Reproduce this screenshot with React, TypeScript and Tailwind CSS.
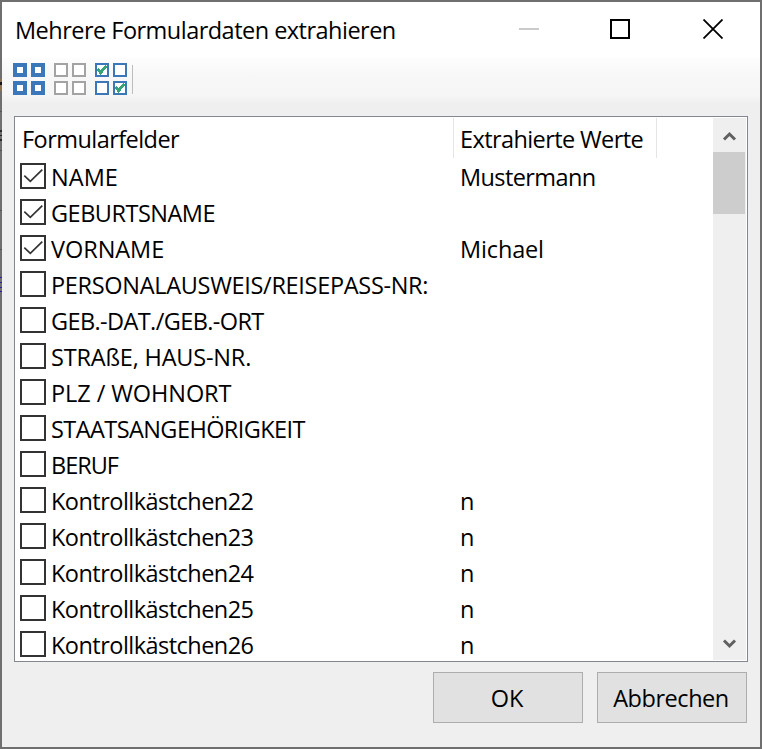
import { useState } from 'react';

const fields = [
  { label: 'NAME', value: 'Mustermann', checked: true, tracking: 'tracking-[0.05px]', valueTracking: 'tracking-[-0.6px]' },
  { label: 'GEBURTSNAME', value: '', checked: true, tracking: 'tracking-[-0.5px]' },
  { label: 'VORNAME', value: 'Michael', checked: true, tracking: 'tracking-[-0.05px]', valueTracking: 'tracking-[-0.15px]' },
  { label: 'PERSONALAUSWEIS/REISEPASS-NR:', value: '', checked: false, tracking: 'tracking-[-0.31px]' },
  { label: 'GEB.-DAT./GEB.-ORT', value: '', checked: false, tracking: 'tracking-[-0.6px]' },
  { label: 'STRAßE, HAUS-NR.', value: '', checked: false, tracking: 'tracking-[-0.19px]' },
  { label: 'PLZ / WOHNORT', value: '', checked: false, tracking: 'tracking-[-0.08px]' },
  { label: 'STAATSANGEHÖRIGKEIT', value: '', checked: false, tracking: 'tracking-[-0.57px]' },
  { label: 'BERUF', value: '', checked: false, tracking: 'tracking-[-1px]' },
  { label: 'Kontrollkästchen22', value: 'n', checked: false, tracking: 'tracking-[-0.53px]' },
  { label: 'Kontrollkästchen23', value: 'n', checked: false, tracking: 'tracking-[-0.53px]' },
  { label: 'Kontrollkästchen24', value: 'n', checked: false, tracking: 'tracking-[-0.53px]' },
  { label: 'Kontrollkästchen25', value: 'n', checked: false, tracking: 'tracking-[-0.53px]' },
  { label: 'Kontrollkästchen26', value: 'n', checked: false, tracking: 'tracking-[-0.53px]' },
];

// top left corners of the four small boxes in a toolbar icon
const cells = [
  [0, 0],
  [18, 0],
  [0, 18],
  [18, 18],
];

function SelectAllIcon() {
  return (
    <svg width="32" height="32" viewBox="0 0 32 32" shapeRendering="crispEdges">
      {cells.map(([x, y]) => (
        <rect key={`${x}-${y}`} x={x + 2} y={y + 2} width="10" height="10" fill="#fff" stroke="#3c78b9" strokeWidth="4" />
      ))}
    </svg>
  );
}

function SelectNoneIcon() {
  return (
    <svg width="32" height="32" viewBox="0 0 32 32" shapeRendering="crispEdges">
      {cells.map(([x, y]) => (
        <rect key={`${x}-${y}`} x={x + 1} y={y + 1} width="12" height="12" fill="#fff" stroke="#a3a3a3" strokeWidth="2" />
      ))}
    </svg>
  );
}

function InvertIcon() {
  return (
    <svg width="32" height="32" viewBox="0 0 32 32" shapeRendering="crispEdges">
      {cells.map(([x, y]) => (
        <rect key={`${x}-${y}`} x={x + 1} y={y + 1} width="12" height="12" fill="#fff" stroke="#3c78b9" strokeWidth="2" />
      ))}
      <path d="M2.5 6 L5.5 9.5 L11.5 3" fill="none" stroke="#36a376" strokeWidth="3" />
      <path d="M20.5 24 L23.5 27.5 L29.5 21" fill="none" stroke="#36a376" strokeWidth="3" />
    </svg>
  );
}

export default function App() {
  const [checked, setChecked] = useState(fields.map((f) => f.checked));

  const toggle = (index: number) => setChecked(checked.map((c, i) => (i === index ? !c : c)));

  return (
    <div className="relative flex h-[749px] w-[762px] flex-col border-2 border-[#6f6f6f] bg-[#efefef] font-['Open_Sans',sans-serif] text-[23.5px] leading-[36px] text-black">
      {/* Title bar */}
      <div className="flex h-14 shrink-0 items-start bg-white pl-[13px]">
        <div className="w-[504px] pt-[10px] whitespace-nowrap"><span className="tracking-[-0.52px]">Mehrere Formulardaten extrahieren</span></div>
        <div className="mt-[26px] h-[2px] w-5 bg-[#cbcbcb]"></div>
        <div className="mt-[17px] ml-[71px] h-5 w-5 border-2 border-black"></div>
        <svg className="mt-[17px] ml-[73px]" width="20" height="20" viewBox="0 0 20 20" stroke="#000" strokeWidth="1.8">
          <path d="M0.5 0.5 L19.5 19.5 M19.5 0.5 L0.5 19.5" />
        </svg>
      </div>

      {/* Toolbar */}
      <div className="flex h-[54px] shrink-0 bg-[linear-gradient(#fdfdfd,#f7f7f7_35%,#f6f6f6_68%,#efefef_85%)] pt-[5px] pl-[11px]">
        <SelectAllIcon />
        <div className="ml-[9px]"><SelectNoneIcon /></div>
        <div className="ml-[9px]"><InvertIcon /></div>
        <div className="mt-[2px] ml-[5px] h-[29px] w-px bg-[#bdbdbd]"></div>
      </div>

      {/* Field list */}
      <div className="mt-[4px] ml-3 flex h-[546px] w-[734px] shrink-0 border border-[#828790] bg-white p-px">
        <div className="w-[697px] overflow-hidden">
          <div className="flex h-10 whitespace-nowrap">
            <div className="w-[438px] border-r border-[#e5e5e5] pt-[3px] pl-[6px]"><span className="tracking-[-0.55px]">Formularfelder</span></div>
            <div className="w-[203px] border-r border-[#e5e5e5] pt-[3px] pl-[6px]"><span className="tracking-[-0.6px]">Extrahierte Werte</span></div>
          </div>
          {fields.map((field, i) => (
            <div key={field.label} className="flex h-9 items-center pl-1 whitespace-nowrap" onClick={() => toggle(i)}>
              <div className="h-[26px] w-[26px] shrink-0 border-2 border-[#333]">
                {checked[i] && (
                  <svg width="22" height="22" viewBox="0 0 22 22" fill="none" stroke="#333" strokeWidth="1.7">
                    <path d="M2.3 10.7 L8.3 16.3 L20.3 4.6" />
                  </svg>
                )}
              </div>
              <div className="w-[414px] pt-px pl-[5px]"><span className={field.tracking}>{field.label}</span></div>
              <div className="pt-px"><span className={field.valueTracking}>{field.value}</span></div>
            </div>
          ))}
        </div>

        {/* Scrollbar */}
        <div className="flex w-[33px] flex-col bg-[#efefef]">
          <svg className="h-[34px] w-8 shrink-0" viewBox="0 0 32 34" fill="none" stroke="#606060" strokeWidth="3">
            <path d="M11 21.5 L16.5 16 L22 21.5" />
          </svg>
          <div className="h-[62px] w-8 shrink-0 bg-[#cdcdcd]"></div>
          <svg className="mt-auto h-[34px] w-8 shrink-0" viewBox="0 0 32 34" fill="none" stroke="#606060" strokeWidth="3">
            <path d="M11 14.5 L16.5 20 L22 14.5" />
          </svg>
        </div>
      </div>

      {/* Buttons */}
      <div className="mt-[10px] flex justify-end gap-[14px] pr-[13px]">
        <button className="h-[51px] w-[150px] border border-[#adadad] bg-[#e1e1e1] pr-[2px]"><span className="tracking-[-0.2px]">OK</span></button>
        <button className="h-[51px] w-[150px] border border-[#adadad] bg-[#e1e1e1] pr-[2px]"><span className="tracking-[-0.45px]">Abbrechen</span></button>
      </div>

      {/* Window behind, showing through the left frame edge */}
      <div className="absolute top-[77px] -left-[2px] w-[2px]">
        <div className="h-[3px] bg-[#8a7350]"></div>
        <div className="h-[3px] bg-[#161616]"></div>
        <div className="h-[6px] bg-[#8a7350]"></div>
        <div className="mt-[20px] h-px bg-[#555]"></div>
        <div className="mt-[18px] h-[2px] bg-[#2b2b2b]"></div>
        <div className="mt-[3px] h-px bg-[#222]"></div>
        <div className="mt-[3px] h-[2px] bg-[#2b2b2b]"></div>
        <div className="mt-[9px] h-px bg-[#555]"></div>
        <div className="mt-[59px] h-px bg-[#555]"></div>
        <div className="mt-[38px] h-px bg-[#555]"></div>
        <div className="mt-[27px] h-px bg-[#2a1fa0]"></div>
        <div className="mt-[4px] h-px bg-[#2a1fa0]"></div>
        <div className="mt-[4px] h-px bg-[#2a1fa0]"></div>
        <div className="mt-[3px] h-px bg-[#2a1fa0]"></div>
      </div>
    </div>
  );
}
